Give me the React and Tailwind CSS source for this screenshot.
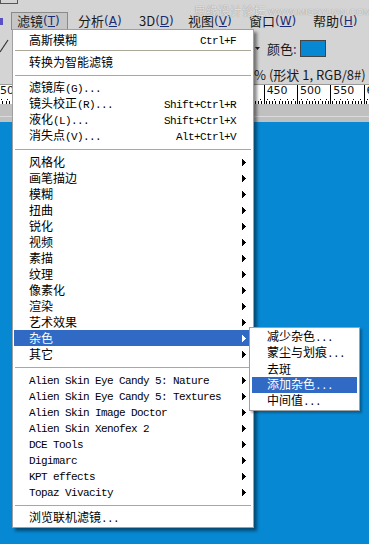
import React from "react";
import clsx from "clsx";

function Txt({ s }) {
  const parts = s.split(/([\x20-\x7e]+)/).filter(Boolean);
  return parts.map((p, i) =>
    /^[\x20-\x7e]+$/.test(p) ? (
      <span
        key={i}
        className="font-['Liberation_Mono',monospace] text-[11px] tracking-[-0.6px] whitespace-pre"
      >
        {p}
      </span>
    ) : (
      <span key={i}>{p}</span>
    )
  );
}

function Arrow({ white }) {
  return (
    <svg width="4" height="7" viewBox="0 0 4 7" className="ml-auto shrink-0" shapeRendering="crispEdges">
      <path d="M0 0L4 3.5L0 7Z" fill={white ? "#ffffff" : "#000000"} />
    </svg>
  );
}

function Row({ label, shortcut, arrow, hl }) {
  return (
    <div
      className={clsx(
        "h-[16px] flex items-center pl-[15px] pr-[3px] leading-[16px] whitespace-nowrap",
        hl ? "bg-[#316ac5] text-white" : "text-black"
      )}
    >
      <span>
        <Txt s={label} />
      </span>
      {shortcut && (
        <span className="ml-auto mr-[10px]">
          <Txt s={shortcut} />
        </span>
      )}
      {arrow && <Arrow white={hl} />}
    </div>
  );
}

function Sep({ small }) {
  return (
    <div className={clsx("pl-[1px] -mr-[2px]", small ? "pt-[2px] pb-[3px]" : "pt-[5px] pb-[4px]")}>
      <div className="h-px bg-[#aca899]" />
    </div>
  );
}

function MenuBarItem({ cn, key1, w, pressed }) {
  return (
    <div
      className={clsx(
        "h-[18px] flex items-center border text-[13px] leading-[18px] whitespace-nowrap",
        pressed ? "border-[#8a8a8a] bg-[#c6c6c6] pl-[5px]" : "border-transparent pl-[5px]",
        w
      )}
    >
      <span className="text-[#1a1a1a]">{cn}</span>
      <span className="text-[#1c2c74] font-['DejaVu_Sans',sans-serif] text-[12px]">
        (<span className="underline">{key1}</span>)
      </span>
    </div>
  );
}

const rulerLabels = [50, 100, 150, 200, 250, 300, 350, 400, 450, 500, 550, 600];

export default function App() {
  const filters = [
    "风格化",
    "画笔描边",
    "模糊",
    "扭曲",
    "锐化",
    "视频",
    "素描",
    "纹理",
    "像素化",
    "渲染",
    "艺术效果",
  ];
  const plugins = [
    "Alien Skin Eye Candy 5: Nature",
    "Alien Skin Eye Candy 5: Textures",
    "Alien Skin Image Doctor",
    "Alien Skin Xenofex 2",
    "DCE Tools",
    "Digimarc",
    "KPT effects",
    "Topaz Vivacity",
  ];
  return (
    <div className="relative w-[369px] h-[544px] overflow-hidden bg-[#0788d3] font-['Noto_Sans_CJK_SC',sans-serif] text-black">
      {/* application chrome */}
      <div className="flex flex-col">
        {/* top strip */}
        <div className="h-[10px] bg-[#d4d4d4]">
          <div className="w-[18px] h-[4px] border border-t-0 border-[#555555]" />
        </div>
        {/* menu bar */}
        <div className="h-[20px] bg-[#d4d4d4] flex items-end">
          <div className="w-[3px] h-[7px] bg-[#5b4fc4] mb-[5px] mr-[8px]" />
          <MenuBarItem cn="滤镜" key1="T" w="w-[57px] mr-[4px]" pressed />
          <MenuBarItem cn="分析" key1="A" w="w-[61px]" />
          <MenuBarItem cn="3D" key1="D" w="w-[49px]" />
          <MenuBarItem cn="视图" key1="V" w="w-[61px]" />
          <MenuBarItem cn="窗口" key1="W" w="w-[64px]" />
          <MenuBarItem cn="帮助" key1="H" w="w-[60px]" />
        </div>
        {/* options bar */}
        <div className="h-[32px] bg-[#d4d4d4] flex items-center pt-[5px]">
          <svg width="10" height="16" viewBox="0 0 10 16" className="shrink-0 -mt-[8px]">
            <path d="M0 15L8 3" stroke="#333333" strokeWidth="1.2" />
          </svg>
          <svg width="5" height="3" viewBox="0 0 5 3" className="ml-[245px] shrink-0">
            <path d="M0 0H5L2.5 3Z" fill="#222222" />
          </svg>
          <span className="ml-[7px] text-[13px] leading-[16px] text-[#1a1a1a]">
            颜色<span className="text-[#4a2a7a]">:</span>
          </span>
          <div className="ml-[3px] w-[26px] h-[17px] border border-[#444444] bg-[#0788d3]" />
        </div>
        {/* document tab row */}
        <div className="h-[22px] bg-[#d4d4d4] flex items-center pt-[3px] pl-[254px] text-[13px] text-[#1a1a1a] whitespace-nowrap overflow-hidden">
          % (形状 1, RGB/8#) *
        </div>
        {/* ruler */}
        <div className="h-[20px] bg-white border-t border-[#9a9a9a] flex overflow-hidden">
          <div className="flex -ml-[3px] shrink-0">
            {rulerLabels.map((n) => (
              <div key={n} className="w-[33.33px] shrink-0 border-l border-black flex flex-col">
                <div className="h-[12px] pl-[2px] text-[11px] leading-[12px] font-['DejaVu_Sans',sans-serif] text-[#111111]">
                  {n}
                </div>
                <div className="h-[3px] flex justify-around items-end">
                  {[0, 1, 2, 3, 4].map((i) => (
                    <div key={i} className="w-px h-px bg-black" />
                  ))}
                </div>
                <div className="h-[4px] flex justify-around items-end">
                  {[0, 1, 2, 3, 4, 5, 6, 7, 8, 9].map((i) => (
                    <div key={i} className="w-px h-[3px] bg-black" />
                  ))}
                </div>
              </div>
            ))}
          </div>
        </div>
        {/* grey band */}
        <div className="h-[18px] bg-[#c0c0c0] flex flex-col">
          <div className="h-[12px]" />
          <div className="h-px bg-[#dcdcdc]" />
        </div>
      </div>

      {/* watermark */}
      <div className="absolute top-[3px] left-[194px] flex items-end gap-[2px] text-white/75 [text-shadow:0_0_1px_rgba(0,0,0,0.45)] whitespace-nowrap pointer-events-none">
        <span className="text-[12px] leading-[15px]">思缘设计论坛</span>
        <span className="font-['Liberation_Sans',sans-serif] text-[9.5px] leading-[13px]">WWW.MISSYUAN.COM</span>
      </div>

      {/* filter menu */}
      <div className="absolute left-[12px] top-[29px] w-[242px] bg-white border border-[#a0a0a0] pt-[2px] pb-[1px] pl-[1px] pr-[4px] shadow-[3px_3px_3px_rgba(0,0,0,0.45)] text-[12px]">
        <Row label="高斯模糊" shortcut="Ctrl+F" />
        <Sep small />
        <Row label="转换为智能滤镜" />
        <Sep />
        <Row label="滤镜库(G)..." />
        <Row label="镜头校正(R)..." shortcut="Shift+Ctrl+R" />
        <Row label="液化(L)..." shortcut="Shift+Ctrl+X" />
        <Row label="消失点(V)..." shortcut="Alt+Ctrl+V" />
        <Sep />
        {filters.map((f) => (
          <Row key={f} label={f} arrow />
        ))}
        <Row label="杂色" arrow hl />
        <Row label="其它" arrow />
        <Sep />
        {plugins.map((p) => (
          <Row key={p} label={p} arrow />
        ))}
        <Sep />
        <Row label="浏览联机滤镜..." />
      </div>

      {/* noise submenu */}
      <div className="absolute left-[249px] top-[327px] w-[111px] bg-white border border-[#a0a0a0] py-[1px] px-[2px] shadow-[2px_2px_2px_rgba(0,0,0,0.3)] text-[12px]">
        <Row label="减少杂色..." />
        <Row label="蒙尘与划痕..." />
        <Row label="去斑" />
        <Row label="添加杂色..." hl />
        <Row label="中间值..." />
      </div>
    </div>
  );
}
